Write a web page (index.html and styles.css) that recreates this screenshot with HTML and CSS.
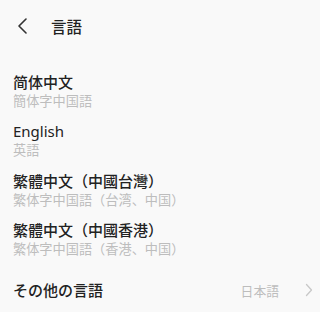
FILE: index.html
```html
<!DOCTYPE html>
<html lang="ja">
<head>
<meta charset="utf-8">
<link rel="stylesheet" href="styles.css">
</head>
<body>
<div class="page">
  <header class="bar">
    <span class="back">
      <svg width="12" height="16" viewBox="0 0 12 16"><path d="M10 1 L3 8 L10 15" fill="none" stroke="#333" stroke-width="1.6" stroke-linecap="round" stroke-linejoin="round"/></svg>
    </span>
    <h1 class="title">言語</h1>
  </header>
  <ul class="list">
    <li class="item"><div class="name">简体中文</div><div class="sub">簡体字中国語</div></li>
    <li class="item"><div class="name latin">English</div><div class="sub">英語</div></li>
    <li class="item"><div class="name">繁體中文（中國台灣）</div><div class="sub">繁体字中国語（台湾、中国）</div></li>
    <li class="item"><div class="name">繁體中文（中國香港）</div><div class="sub">繁体字中国語（香港、中国）</div></li>
  </ul>
  <div class="other">
    <span class="name">その他の言語</span>
    <span class="value">日本語</span>
    <svg class="chev" width="8" height="14" viewBox="0 0 8 14"><path d="M1.5 1.5 L6.5 7 L1.5 12.5" fill="none" stroke="#c8c8c8" stroke-width="1.3" stroke-linecap="round" stroke-linejoin="round"/></svg>
  </div>
</div>
</body>
</html>
```

FILE: styles.css
```css
html, body {
  margin: 0;
  padding: 0;
  background: #f9f9f9;
}
body {
  font-family: "Noto Sans", "Noto Sans CJK JP", sans-serif;
  color: #222;
}
.page {
  width: 318px;
  height: 312px;
  overflow: hidden;
}
.bar {
  height: 52px;
  display: flex;
  align-items: center;
}
.back {
  display: flex;
  margin-left: 16px;
  width: 35px;
}
.title {
  margin: 0;
  font-size: 15.5px;
  font-weight: 500;
  color: #222;
}
.list {
  list-style: none;
  margin: 0;
  padding: 14.5px 0 0 13px;
}
.item {
  height: 49.6px;
  box-sizing: border-box;
  padding-top: 6px;
}
.name {
  font-size: 15px;
  font-weight: 500;
  line-height: 19px;
  color: #222;
}
.latin {
  font-weight: 400;
}
.sub {
  font-size: 13.2px;
  line-height: 19px;
  color: #bdbdbd;
}
.other {
  height: 51px;
  display: flex;
  align-items: center;
  padding: 0 5px 0 13px;
}
.other .name {
  flex: 1;
}
.value {
  font-size: 12.8px;
  color: #bdbdbd;
  margin-right: 26px;
}
```
